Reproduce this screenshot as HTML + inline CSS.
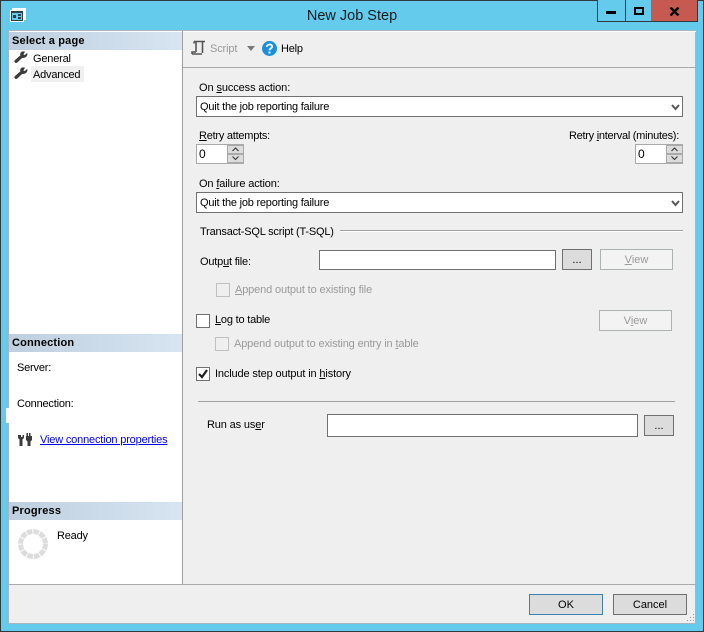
<!DOCTYPE html>
<html><head><meta charset="utf-8"><title>New Job Step</title>
<style>
html,body{margin:0;padding:0;width:704px;height:632px;overflow:hidden;background:#65cbec}
body{position:relative;font:11px "Liberation Sans",sans-serif;color:#000}
.a,.t,.f,.b,.c,.h{position:absolute;box-sizing:border-box}
.t{white-space:nowrap;height:14px;line-height:14px;letter-spacing:-.2px;margin-top:1px}
.w{letter-spacing:-.14px}
.g{color:#9a9a9a}
.f{background:#fff;border:1px solid #707070;line-height:21px;padding-left:3px;letter-spacing:-.22px}
.b{background:#dcdcdc;border:1px solid #707070;text-align:center;line-height:21px}
.v{background:#f3f3f3;border:1px solid #adb2b5;color:#9a9a9a;text-align:center;line-height:21px}
.c{width:14px;height:14px;background:#fff;border:1px solid #707070}
.cd{background:#efefef;border-color:#c0c0c0}
.h{left:9px;width:173px;height:18px;background:linear-gradient(90deg,#bfcfdf,#d7e5f2);font-weight:bold;line-height:19px;padding-left:3px;letter-spacing:.18px}
u{text-decoration:underline}
svg{position:absolute;display:block}
</style></head><body>
<div class="a" style="inset:0;border:1px solid #2d3a40"></div>
<div class="a" style="left:597px;top:0;width:101px;height:22px;background:#65cbec;border:1px solid #2d3a40;border-top:0"></div>
<div class="a" style="left:625px;top:0;width:1px;height:21px;background:#2d3a40"></div>
<div class="a" style="left:651px;top:0;width:46px;height:21px;background:#c75a50"></div>
<div class="a" style="left:606px;top:11px;width:10px;height:3px;background:#000"></div>
<div class="a" style="left:634px;top:7px;width:10px;height:8px;border:2px solid #000"></div>
<svg style="left:669px;top:7px" width="11" height="9" viewBox="0 0 11 9"><path d="M1.500 .5L9.500 8.500M9.500 .5L1.500 8.500" stroke="#000" stroke-width="2.400"/></svg>
<svg style="left:10px;top:8px" width="16" height="14" viewBox="0 0 16 14"><path d="M2 0h14v12h-2V2H2z" fill="#fff"/><rect x="0" y="2" width="14" height="12" fill="#fff"/><rect x="1" y="3" width="12" height="10" fill="#2e3f48"/><rect x="2" y="5" width="10" height="7" fill="#65cbec"/><rect x="3" y="7" width="3" height="3" fill="#2e3f48"/><rect x="8" y="6" width="3" height="2" fill="#2e3f48"/><rect x="8" y="9" width="3" height="2" fill="#2e3f48"/></svg>
<div class="t" style="left:0;width:704px;text-align:center;top:6px;height:18px;line-height:18px;font-size:14.500px;letter-spacing:0;color:#1a1a1a">New Job Step</div>

<div class="a" style="left:8px;top:30px;width:688px;height:594px;background:#efefef;border:1px solid #a9b4bc"></div>
<div class="a" style="left:9px;top:31px;width:173px;height:553px;background:#fff"></div>
<div class="a" style="left:182px;top:31px;width:1px;height:553px;background:#a0a0a0"></div>
<div class="a" style="left:9px;top:584px;width:687px;height:1px;background:#a9a9ae"></div>
<div class="a" style="left:183px;top:31px;width:513px;height:1px;background:#fff"></div>
<div class="a" style="left:183px;top:67px;width:513px;height:1px;background:#a9a9a9"></div>
<div class="a" style="left:6px;top:408px;width:3px;height:15px;background:#fff"></div>

<div class="h" style="top:32px">Select a page</div>
<svg style="left:14px;top:51px" width="14" height="13" viewBox="0 0 14 13"><path d="M13 2.500L10.500 4.500L9 3.500L10.500 1C8.500 .2 6.500 1.200 6.500 3.500L6.700 4.500L1 9.500C.2 10.500 1.500 12.200 2.800 11.500L8 6.600C10.500 7 13.300 5.500 13 2.500Z" fill="#3c3c3c" stroke="#3c3c3c" stroke-width=".7"/></svg>
<svg style="left:14px;top:67px" width="14" height="13" viewBox="0 0 14 13"><path d="M13 2.500L10.500 4.500L9 3.500L10.500 1C8.500 .2 6.500 1.200 6.500 3.500L6.700 4.500L1 9.500C.2 10.500 1.500 12.200 2.800 11.500L8 6.600C10.500 7 13.300 5.500 13 2.500Z" fill="#3c3c3c" stroke="#3c3c3c" stroke-width=".7"/></svg>
<div class="t" style="left:33px;top:51px">General</div>
<div class="a" style="left:31px;top:66px;width:53px;height:16px;background:#f0f0f0"></div>
<div class="t" style="left:33px;top:67px">Advanced</div>

<div class="h" style="top:334px">Connection</div>
<div class="t" style="left:17px;top:360px">Server:</div>
<div class="t" style="left:17px;top:396px">Connection:</div>
<svg style="left:18px;top:433px" width="15" height="14" viewBox="0 0 15 14"><path d="M0 2v3l1.500 1.500V13h3V6.500L6 5V2H4.500v2h-1.500V2zM8.500 0h1.500v3h1V0h1.500v3H14v4l-1.500 1.500V13h-3V8.500L8 7V3h.5z" fill="#3c3c3c"/></svg>
<div class="t" style="left:40px;top:432px;color:#0000ee;letter-spacing:-.17px"><u>View connection properties</u></div>

<div class="h" style="top:502px">Progress</div>
<svg style="left:18px;top:529px" width="30" height="30" viewBox="0 0 30 30"><circle cx="15" cy="15" r="12.500" fill="none" stroke="#dddddd" stroke-width="5" stroke-dasharray="5.600 .945"/></svg>
<div class="t" style="left:57px;top:528px">Ready</div>

<svg style="left:191px;top:40px" width="16" height="16" viewBox="0 0 16 16"><path d="M3 1.500h11M5 1.500V12M11.500 1.500V13M1 14h10M1 14v-2h4M3 1.500v2" fill="none" stroke="#555" stroke-width="1.600"/></svg>
<div class="t g w" style="left:210px;top:41px">Script</div>
<svg style="left:247px;top:46px" width="8" height="5" viewBox="0 0 8 5"><path d="M0 0h8L4 5z" fill="#7a7a7a"/></svg>
<svg style="left:262px;top:41px" width="15" height="15" viewBox="0 0 15 15"><circle cx="7.500" cy="7.500" r="7.500" fill="#1b8fdc"/><path d="M4.800 5.800C5 2.800 10.200 2.800 10.200 5.600C10.200 7.400 7.500 7.400 7.500 9.300" fill="none" stroke="#fff" stroke-width="1.800"/><rect x="6.500" y="10.500" width="2" height="2" fill="#fff"/></svg>
<div class="t" style="left:281px;top:41px">Help</div>

<div class="t w" style="left:199px;top:80px;letter-spacing:-.1px">On <u>s</u>uccess action:</div>
<div class="f" style="left:196px;top:96px;width:487px;height:21px">Quit the job reporting failure</div>
<svg style="left:671px;top:104px" width="9" height="7" viewBox="0 0 9 7"><path d="M1 1l3.500 4L8 1" fill="none" stroke="#555" stroke-width="2"/></svg>

<div class="t" style="left:199px;top:128px;letter-spacing:-.24px"><u>R</u>etry attempts:</div>
<div class="a" style="left:196px;top:144px;width:48px;height:20px;background:#a9a9a9"></div>
<div class="a" style="left:197px;top:145px;width:30px;height:18px;background:#fff;line-height:18px;padding-left:2px;font-size:12px">0</div>
<div class="a" style="left:228px;top:146px;width:15px;height:7px;background:#dcdcdc"></div>
<div class="a" style="left:228px;top:155px;width:15px;height:7px;background:#dcdcdc"></div>
<svg style="left:231px;top:147px" width="9" height="14" viewBox="0 0 9 14"><path d="M1.500 4L4.500 1L7.500 4M1.500 9.500L4.500 12.500L7.500 9.500" fill="none" stroke="#333" stroke-width="1.100"/></svg>

<div class="t" style="right:25px;top:128px;letter-spacing:-.27px">Retry <u>i</u>nterval (minutes):</div>
<div class="a" style="left:635px;top:144px;width:48px;height:20px;background:#a9a9a9"></div>
<div class="a" style="left:636px;top:145px;width:30px;height:18px;background:#fff;line-height:18px;padding-left:2px;font-size:12px">0</div>
<div class="a" style="left:667px;top:146px;width:15px;height:7px;background:#dcdcdc"></div>
<div class="a" style="left:667px;top:155px;width:15px;height:7px;background:#dcdcdc"></div>
<svg style="left:670px;top:147px" width="9" height="14" viewBox="0 0 9 14"><path d="M1.500 4L4.500 1L7.500 4M1.500 9.500L4.500 12.500L7.500 9.500" fill="none" stroke="#333" stroke-width="1.100"/></svg>

<div class="t w" style="left:199px;top:176px">On <u>f</u>ailure action:</div>
<div class="f" style="left:196px;top:192px;width:487px;height:21px">Quit the job reporting failure</div>
<svg style="left:671px;top:200px" width="9" height="7" viewBox="0 0 9 7"><path d="M1 1l3.500 4L8 1" fill="none" stroke="#555" stroke-width="2"/></svg>

<div class="t" style="left:200px;top:224px">Transact-SQL script (T-SQL)</div>
<div class="a" style="left:340px;top:230px;width:343px;height:1px;background:#a0a0a0"></div>
<div class="a" style="left:340px;top:231px;width:343px;height:1px;background:#fff"></div>

<div class="t" style="left:200px;top:254px">Outp<u>u</u>t file:</div>
<div class="f" style="left:319px;top:250px;width:237px;height:20px"></div>
<div class="b" style="left:562px;top:249px;width:30px;height:21px">...</div>
<div class="b v" style="left:600px;top:249px;width:73px;height:21px"><u>V</u>iew</div>
<div class="c cd" style="left:216px;top:283px"></div>
<div class="t g w" style="left:235px;top:282px"><u>A</u>ppend output to existing file</div>

<div class="c" style="left:196px;top:314px"></div>
<div class="t" style="left:215px;top:312px"><u>L</u>og to table</div>
<div class="b v" style="left:599px;top:310px;width:73px;height:21px">V<u>i</u>ew</div>
<div class="c cd" style="left:215px;top:337px"></div>
<div class="t g w" style="left:234px;top:336px">Append output to existing entry in <u>t</u>able</div>

<div class="c" style="left:196px;top:367px"></div>
<svg style="left:197px;top:368px" width="12" height="12" viewBox="0 0 12 12"><path d="M2 6l3 3l5-7" fill="none" stroke="#1f1f1f" stroke-width="2.200"/></svg>
<div class="t w" style="left:215px;top:366px">Include step output in <u>h</u>istory</div>

<div class="a" style="left:198px;top:401px;width:477px;height:1px;background:#a0a0a0"></div>
<div class="t w" style="left:207px;top:417px">Run as us<u>e</u>r</div>
<div class="f" style="left:327px;top:414px;width:311px;height:23px"></div>
<div class="b" style="left:644px;top:415px;width:30px;height:21px">...</div>

<div class="b" style="left:529px;top:594px;width:74px;height:21px;border-color:#3c7fb1;line-height:20px">OK</div>
<div class="b" style="left:613px;top:594px;width:74px;height:21px;line-height:20px">Cancel</div>
<svg style="left:686px;top:613px" width="9" height="9" viewBox="0 0 9 9"><path d="M7 1h1v1H7zM4 4h1v1H4zM7 4h1v1H7zM1 7h1v1H1zM4 7h1v1H4zM7 7h1v1H7z" fill="#9a9a9a"/></svg>
</body></html>
